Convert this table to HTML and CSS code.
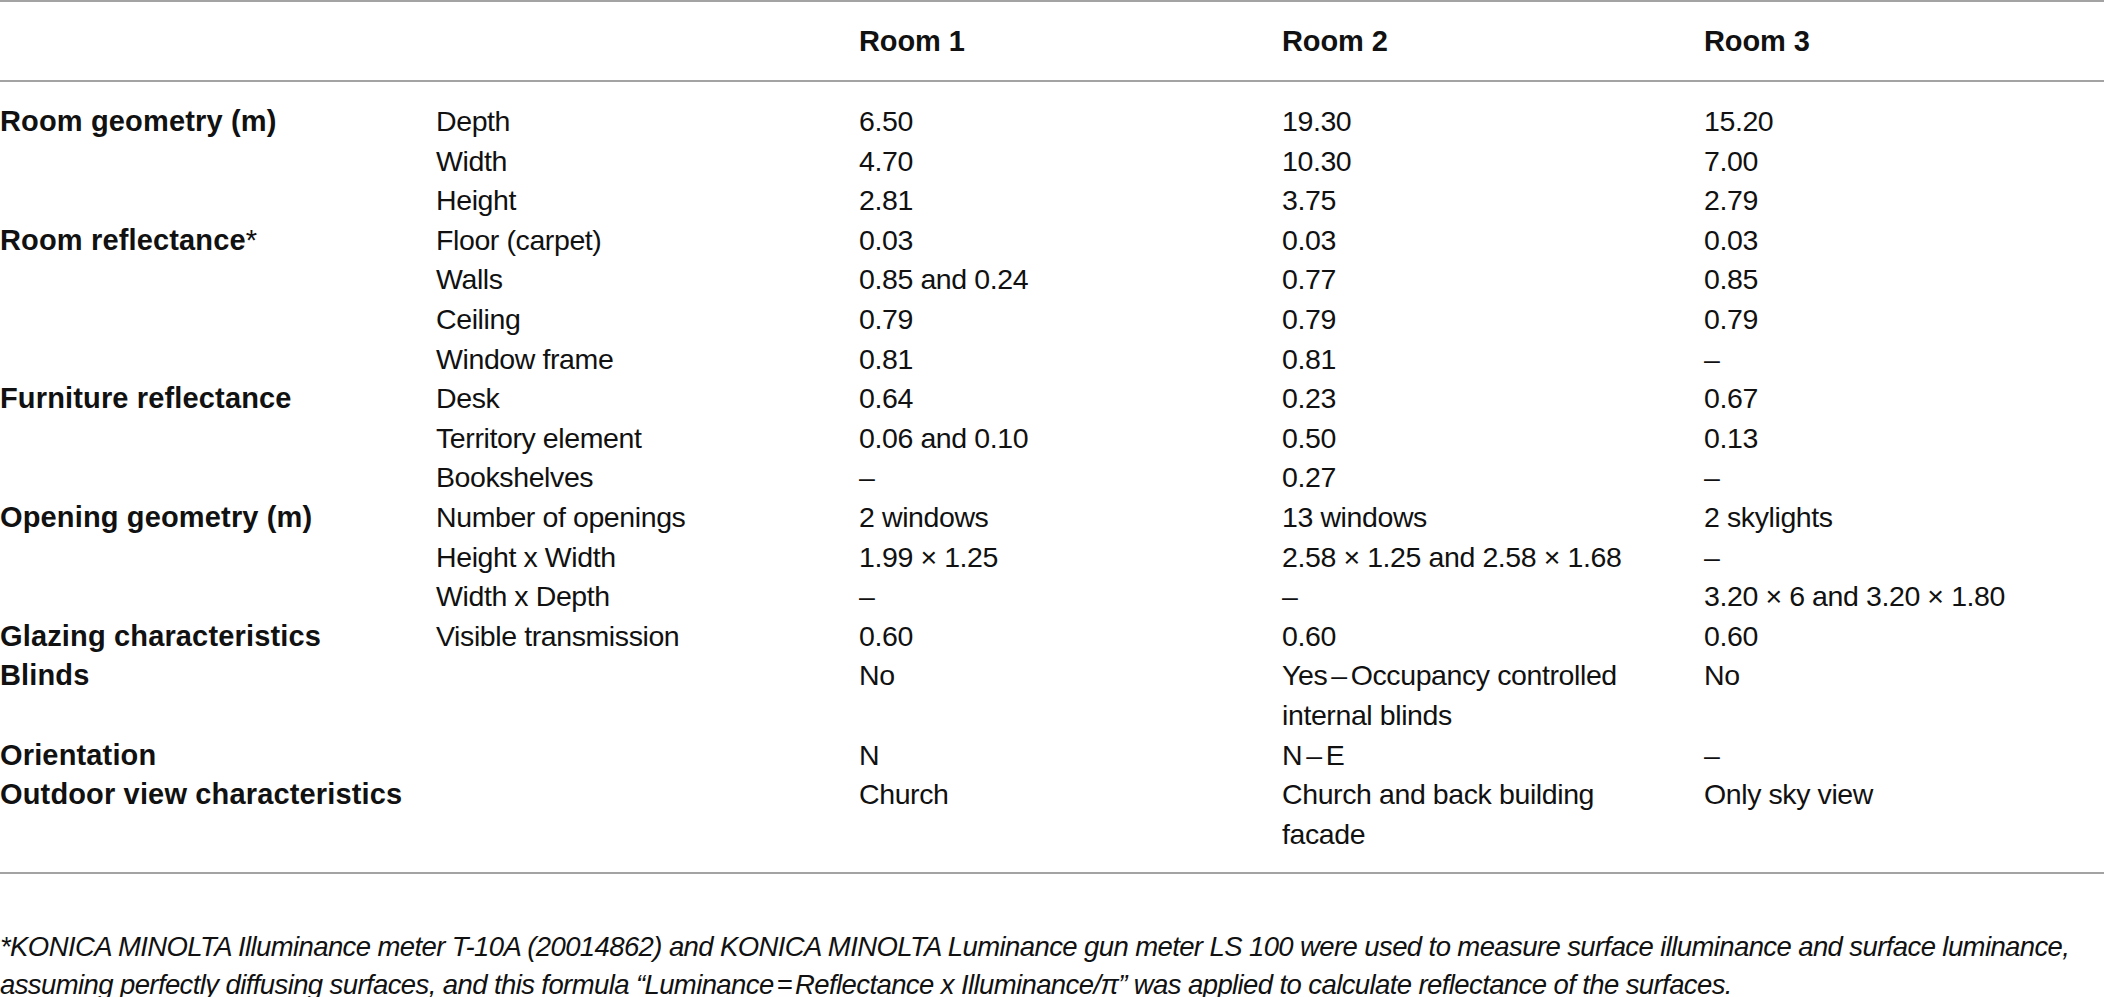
FILE: index.html
```html
<!DOCTYPE html>
<html lang="en">
<head>
<meta charset="utf-8">
<title>Room characteristics</title>
<link rel="stylesheet" href="styles.css">
</head>
<body>
<table class="data">
  <colgroup>
    <col class="c-cat">
    <col class="c-sub">
    <col class="c-room1">
    <col class="c-room2">
    <col class="c-room3">
  </colgroup>
  <thead>
    <tr>
      <th></th>
      <th></th>
      <th>Room 1</th>
      <th>Room 2</th>
      <th>Room 3</th>
    </tr>
  </thead>
  <tbody>
    <tr class="first">
      <td class="cat">Room geometry (m)</td><td>Depth</td><td>6.50</td><td>19.30</td><td>15.20</td>
    </tr>
    <tr><td></td><td>Width</td><td>4.70</td><td>10.30</td><td>7.00</td></tr>
    <tr><td></td><td>Height</td><td>2.81</td><td>3.75</td><td>2.79</td></tr>
    <tr>
      <td class="cat">Room reflectance<span class="ast">*</span></td><td>Floor (carpet)</td><td>0.03</td><td>0.03</td><td>0.03</td>
    </tr>
    <tr><td></td><td>Walls</td><td>0.85 and 0.24</td><td>0.77</td><td>0.85</td></tr>
    <tr><td></td><td>Ceiling</td><td>0.79</td><td>0.79</td><td>0.79</td></tr>
    <tr><td></td><td>Window frame</td><td>0.81</td><td>0.81</td><td>–</td></tr>
    <tr>
      <td class="cat">Furniture reflectance</td><td>Desk</td><td>0.64</td><td>0.23</td><td>0.67</td>
    </tr>
    <tr><td></td><td>Territory element</td><td>0.06 and 0.10</td><td>0.50</td><td>0.13</td></tr>
    <tr><td></td><td>Bookshelves</td><td>–</td><td>0.27</td><td>–</td></tr>
    <tr>
      <td class="cat">Opening geometry (m)</td><td>Number of openings</td><td>2 windows</td><td>13 windows</td><td>2 skylights</td>
    </tr>
    <tr><td></td><td>Height x Width</td><td>1.99 × 1.25</td><td>2.58 × 1.25 and 2.58 × 1.68</td><td>–</td></tr>
    <tr><td></td><td>Width x Depth</td><td>–</td><td>–</td><td>3.20 × 6 and 3.20 × 1.80</td></tr>
    <tr>
      <td class="cat">Glazing characteristics</td><td>Visible transmission</td><td>0.60</td><td>0.60</td><td>0.60</td>
    </tr>
    <tr>
      <td class="cat">Blinds</td><td></td><td>No</td><td>Yes<span class="dash">–</span>Occupancy controlled<br>internal blinds</td><td>No</td>
    </tr>
    <tr>
      <td class="cat">Orientation</td><td></td><td>N</td><td>N<span class="dash">–</span>E</td><td>–</td>
    </tr>
    <tr class="last">
      <td class="cat">Outdoor view characteristics</td><td></td><td>Church</td><td>Church and back building<br>facade</td><td>Only sky view</td>
    </tr>
  </tbody>
</table>
<p class="note">*KONICA MINOLTA Illuminance meter T-10A (20014862) and KONICA MINOLTA Luminance gun meter LS 100 were used to measure surface illuminance and surface luminance,<br>assuming perfectly diffusing surfaces, and this formula “Luminance<span class="eq">=</span>Reflectance x Illuminance/π” was applied to calculate reflectance of the surfaces.</p>
</body>
</html>
```
FILE: styles.css
```css
html, body {
  margin: 0;
  padding: 0;
  background: #ffffff;
}

body {
  font-family: "Liberation Sans", Arial, sans-serif;
  color: #111111;
  width: 2104px;
  overflow: hidden;
}

.data {
  width: 2104px;
  border-collapse: collapse;
  table-layout: fixed;
  font-size: 28.5px;
}

.c-cat { width: 436px; }
.c-sub { width: 423px; }
.c-room1 { width: 423px; }
.c-room2 { width: 422px; }
.c-room3 { width: 400px; }

.data th {
  height: 78px;
  padding: 0;
  text-align: left;
  vertical-align: middle;
  font-weight: bold;
  font-size: 29px;
  letter-spacing: -0.1px;
  border-top: 2px solid #a3a3a3;
  border-bottom: 2px solid #a3a3a3;
}

.data td {
  padding: 0;
  line-height: 39.6px;
  vertical-align: top;
  text-align: left;
  letter-spacing: -0.4px;
  white-space: nowrap;
}

.data td.cat {
  font-weight: bold;
  font-size: 29px;
  letter-spacing: 0.15px;
}

.ast {
  font-weight: normal;
}

.dash {
  margin: 0 4px;
}

.data tr.first td {
  padding-top: 20px;
}

.data tr.last td {
  padding-bottom: 18px;
  border-bottom: 2px solid #a3a3a3;
}

.note {
  margin: 54px 0 0 0;
  font-style: italic;
  font-size: 27.5px;
  line-height: 38px;
  letter-spacing: -0.6px;
  white-space: nowrap;
}

.eq {
  margin: 0 3px;
}
```
